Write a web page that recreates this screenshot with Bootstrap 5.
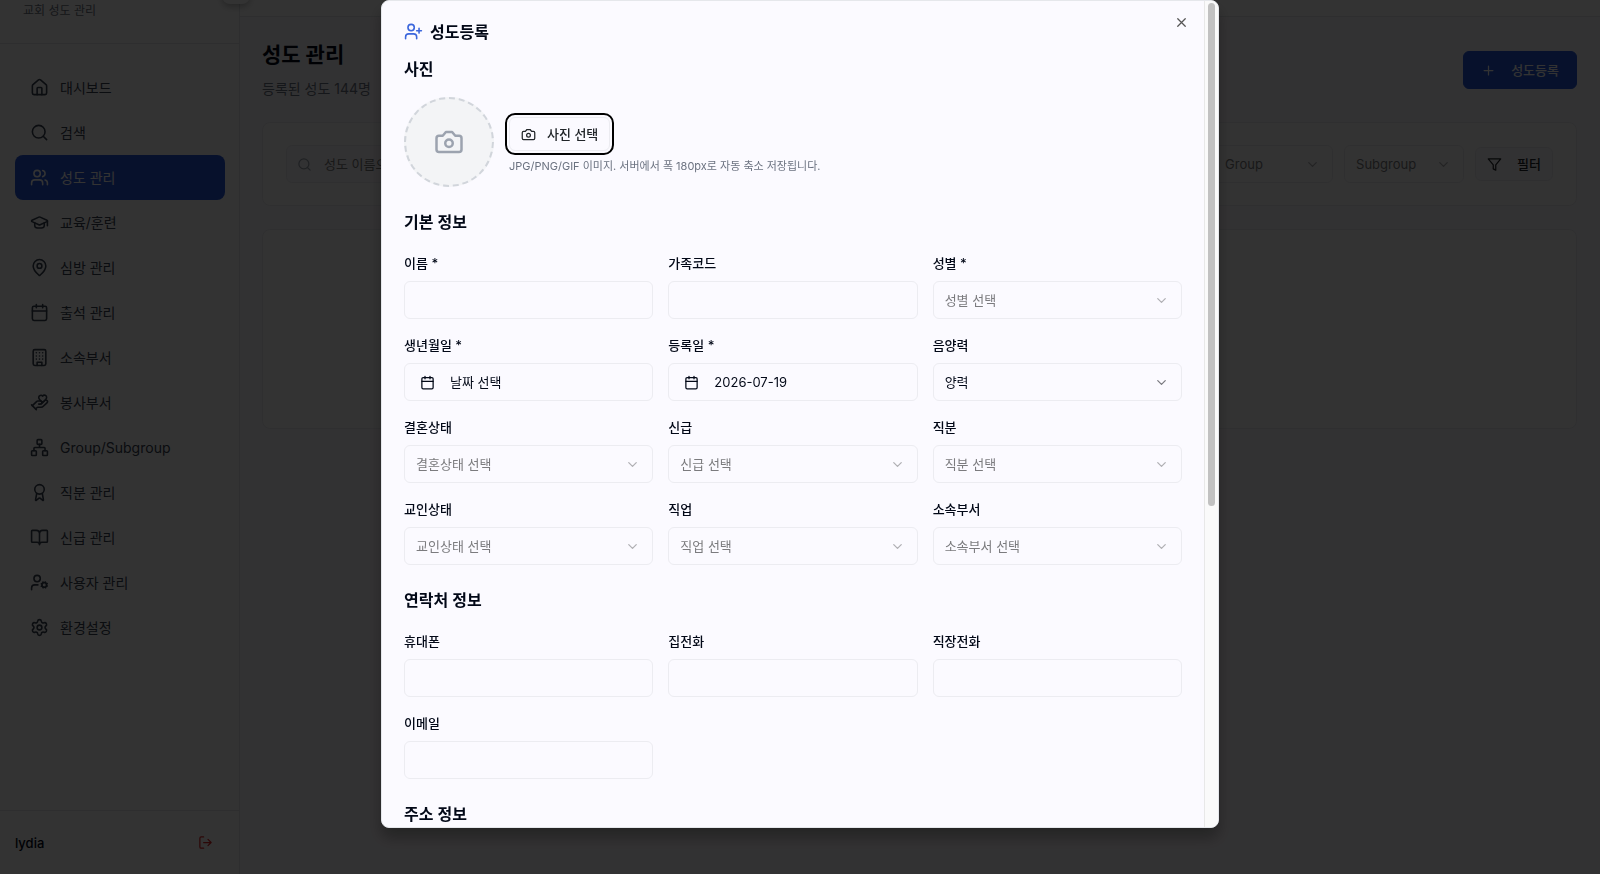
<!DOCTYPE html>
<html lang="ko">
<head>
<meta charset="utf-8">
<meta name="viewport" content="width=device-width, initial-scale=1">
<title>성도 관리</title>
<link href="https://cdn.jsdelivr.net/npm/bootstrap@5.3.0/dist/css/bootstrap.min.css" rel="stylesheet">
<script src="https://cdn.jsdelivr.net/npm/bootstrap@5.3.0/dist/js/bootstrap.bundle.min.js" defer></script>
<style>
  :root {
    --ink: #020817;
    --slate: #374151;
    --muted: #6b7280;
    --line: #ececf1;
    --canvas: #fbfaff;
    --primary: #2456db;
  }
  body {
    font-family: Inter, "Noto Sans CJK KR", sans-serif;
    font-size: 13px;
    line-height: 22px;
    color: var(--ink);
    background: var(--canvas);
    overflow: hidden;
  }
  .ico {
    width: 15px; height: 15px; flex: none;
    fill: none; stroke: currentColor; stroke-width: 2;
    stroke-linecap: round; stroke-linejoin: round;
  }
  .ico-md { width: 19px; height: 19px; }
  .ico-lg { width: 30px; height: 30px; }
  .btn, .form-control, .form-select { font-size: 13px; line-height: 20px; border-radius: 6px; }
  .btn { --bs-btn-padding-x: 15px; --bs-btn-padding-y: 0; font-weight: 500; }

  .side { width: 240px; background: #fff; border-right: 1px solid #e5e7eb; }
  .side-head { height: 44px; padding-left: 23px; border-bottom: 1px solid #e5e7eb; color: var(--muted); font-size: 12px; }
  .side-nav { padding: 21px 14px 21px 15px; }
  .side-nav .nav-link {
    display: flex; align-items: center; gap: 11px;
    height: 45px; padding: 0 15px; border-radius: 8px;
    color: var(--slate); font-size: 14px;
  }
  .side-nav .nav-link.active { background: var(--primary); color: #fff; }
  .side-foot { height: 64px; padding: 0 26px 0 15px; border-top: 1px solid #e5e7eb; }
  .side-foot .btn { color: #dc2626; }
  .side-toggle { top: -24px; left: 222px; width: 28px; height: 28px; background: #fff; border-radius: 8px; box-shadow: 0 3px 6px rgba(0,0,0,.25); }

  .topbar { height: 17px; background: #fff; border-bottom: 1px solid #e5e7eb; }
  .page { padding: 23px 23px 0 22px; }
  .page h1 { font-size: 21px; line-height: 30px; }
  .page-sub { font-size: 14px; color: var(--muted); }
  .btn-main { --bs-btn-color: #fff; --bs-btn-bg: var(--primary); --bs-btn-border-color: var(--primary); height: 38px; padding: 0 17px; gap: 15px; }
  .panel { background: #fff; border: 1px solid var(--line); border-radius: 8px; }
  .tools { padding: 23px; height: 84px; margin-top: 22px; gap: 11px; }
  .results { height: 200px; margin-top: 23px; }
  .search-box { height: 38px; border: 1px solid var(--line); border-radius: 6px; background: var(--canvas); padding: 0 10px; gap: 10px; color: #9ca3af; }
  .search-box input { border: 0; outline: 0; background: none; min-width: 0; flex: 1; }
  .search-box input::placeholder { color: #777; }
  .short-select { width: 120px; }
  .btn-quiet { --bs-btn-bg: var(--canvas); --bs-btn-border-color: var(--line); height: 34px; padding: 0 11px; gap: 15px; }

  .dim { background: rgba(0,0,0,.8); }
  .sheet { width: 838px; max-width: 100%; height: calc(100vh - 46px); }
  .sheet-box {
    background: var(--canvas); border: 1px solid #e5e7eb; border-radius: 8px;
    height: 100%; overflow: hidden; box-shadow: 0 10px 15px rgba(0,0,0,.3);
  }
  .sheet-scroll { padding: 21px 22px; overflow: hidden; min-width: 0; }
  .rail { width: 14px; padding: 2px 3px 0; background: #fafafa; border-left: 1px solid #e8e8e8; }
  .rail-thumb { height: 61%; background: #c1c1c1; border-radius: 4px; }
  .sheet h2, .sheet h3 { font-size: 16px; font-weight: 600; line-height: 26px; margin: 0; }
  .sheet h2 { line-height: 18px; }
  .sheet-title { color: #3b66dc; gap: 7px; margin-bottom: 15px; }
  .sheet-title h2 { color: var(--ink); }
  .sheet-close { top: 14px; right: 28px; width: 16px; height: 16px; color: #555; line-height: 1; }
  .photo-row { margin: 15px 0 22px; gap: 15px; }
  .photo { width: 90px; height: 90px; background: #f3f4f6; border: 2px dashed #d1d5db; color: #9ca3af; }
  .photo-side { padding-top: 7px; }
  .pick { --bs-btn-border-color: var(--line); height: 34px; outline: 2px solid #000; outline-offset: 2px; padding: 0 11px; gap: 11px; }
  .hint { font-size: 11px; line-height: 15px; color: var(--muted); margin-top: 8px; }
  .fields { display: grid; grid-template-columns: repeat(3, minmax(0, 1fr)); gap: 15px; margin: 17px 0 22px; }
  .fields label { display: block; font-weight: 500; margin-bottom: 7px; line-height: 22px; }
  .form-control, .form-select, .date-btn { height: 38px; border: 1px solid var(--line); background-color: transparent; color: var(--ink); padding: 0 11px; }
  .form-select {
    --bs-form-select-bg-img: url("data:image/svg+xml,%3csvg xmlns='http://www.w3.org/2000/svg' viewBox='0 0 24 24' fill='none' stroke='%237a7a80' stroke-width='2' stroke-linecap='round' stroke-linejoin='round'%3e%3cpath d='m6 9 6 6 6-6'/%3e%3c/svg%3e");
    background-position: right 12px center; background-size: 15px;
  }
  .form-select.unset {
    --bs-form-select-bg-img: url("data:image/svg+xml,%3csvg xmlns='http://www.w3.org/2000/svg' viewBox='0 0 24 24' fill='none' stroke='%23b0b0b4' stroke-width='2' stroke-linecap='round' stroke-linejoin='round'%3e%3cpath d='m6 9 6 6 6-6'/%3e%3c/svg%3e");
    color: #7b7b7e;
  }
  .date-btn { font-weight: 400; gap: 15px; padding: 0 15px; }
</style>
</head>
<body>
<div class="d-flex vh-100 position-relative">
  <aside class="side d-flex flex-column flex-shrink-0">
    <div class="side-head flex-shrink-0">교회 성도 관리</div>
    <nav class="side-nav nav flex-column flex-grow-1 flex-nowrap">
      <a class="nav-link" href="#"><svg class="ico ico-md" viewBox="0 0 24 24"><path d="M15 21v-8a1 1 0 0 0-1-1h-4a1 1 0 0 0-1 1v8"/><path d="M3 10a2 2 0 0 1 .709-1.528l7-5.999a2 2 0 0 1 2.582 0l7 5.999A2 2 0 0 1 21 10v9a2 2 0 0 1-2 2H5a2 2 0 0 1-2-2z"/></svg>대시보드</a>
      <a class="nav-link" href="#"><svg class="ico ico-md" viewBox="0 0 24 24"><circle cx="11" cy="11" r="8"/><path d="m21 21-4.3-4.3"/></svg>검색</a>
      <a class="nav-link active" href="#"><svg class="ico ico-md" viewBox="0 0 24 24"><path d="M16 21v-2a4 4 0 0 0-4-4H6a4 4 0 0 0-4 4v2"/><circle cx="9" cy="7" r="4"/><path d="M22 21v-2a4 4 0 0 0-3-3.87M16 3.13a4 4 0 0 1 0 7.75"/></svg>성도 관리</a>
      <a class="nav-link" href="#"><svg class="ico ico-md" viewBox="0 0 24 24"><path d="M21.42 10.922a1 1 0 0 0-.019-1.838L12.83 5.18a2 2 0 0 0-1.66 0L2.6 9.08a1 1 0 0 0 0 1.832l8.57 3.908a2 2 0 0 0 1.66 0z"/><path d="M22 10v6M6 12.5V16a6 3 0 0 0 12 0v-3.5"/></svg>교육/훈련</a>
      <a class="nav-link" href="#"><svg class="ico ico-md" viewBox="0 0 24 24"><path d="M20 10c0 4.993-5.539 10.193-7.399 11.799a1 1 0 0 1-1.202 0C9.539 20.193 4 14.993 4 10a8 8 0 0 1 16 0"/><circle cx="12" cy="10" r="3"/></svg>심방 관리</a>
      <a class="nav-link" href="#"><svg class="ico ico-md" viewBox="0 0 24 24"><path d="M8 2v4M16 2v4M3 10h18"/><rect width="18" height="18" x="3" y="4" rx="2"/></svg>출석 관리</a>
      <a class="nav-link" href="#"><svg class="ico ico-md" viewBox="0 0 24 24"><rect width="16" height="20" x="4" y="2" rx="2"/><path d="M9 22v-4h6v4M8 6h.01M16 6h.01M12 6h.01M12 10h.01M12 14h.01M16 10h.01M16 14h.01M8 10h.01M8 14h.01"/></svg>소속부서</a>
      <a class="nav-link" href="#"><svg class="ico ico-md" viewBox="0 0 24 24"><path d="M11 14h2a2 2 0 1 0 0-4h-3c-.6 0-1.1.2-1.4.6L3 16"/><path d="m7 20 1.6-1.4c.3-.4.8-.6 1.4-.6h4c1.1 0 2.1-.4 2.8-1.2l4.6-4.4a2 2 0 0 0-2.75-2.91l-4.2 3.9"/><path d="m2 15 6 6M19.5 8.5c.7-.7 1.5-1.6 1.5-2.7A2.73 2.73 0 0 0 16 4a2.78 2.78 0 0 0-5 1.8c0 1.2.8 2 1.5 2.8L16 12Z"/></svg>봉사부서</a>
      <a class="nav-link" href="#"><svg class="ico ico-md" viewBox="0 0 24 24"><rect x="16" y="16" width="6" height="6" rx="1"/><rect x="2" y="16" width="6" height="6" rx="1"/><rect x="9" y="2" width="6" height="6" rx="1"/><path d="M5 16v-3a1 1 0 0 1 1-1h12a1 1 0 0 1 1 1v3M12 12V8"/></svg>Group/Subgroup</a>
      <a class="nav-link" href="#"><svg class="ico ico-md" viewBox="0 0 24 24"><path d="m15.477 12.89 1.515 8.526a.5.5 0 0 1-.81.47l-3.58-2.687a1 1 0 0 0-1.197 0l-3.586 2.686a.5.5 0 0 1-.81-.469l1.514-8.526"/><circle cx="12" cy="8" r="6"/></svg>직분 관리</a>
      <a class="nav-link" href="#"><svg class="ico ico-md" viewBox="0 0 24 24"><path d="M12 7v14M3 18a1 1 0 0 1-1-1V4a1 1 0 0 1 1-1h5a4 4 0 0 1 4 4 4 4 0 0 1 4-4h5a1 1 0 0 1 1 1v13a1 1 0 0 1-1 1h-6a3 3 0 0 0-3 3 3 3 0 0 0-3-3z"/></svg>신급 관리</a>
      <a class="nav-link" href="#"><svg class="ico ico-md" viewBox="0 0 24 24"><circle cx="18" cy="15" r="3"/><circle cx="9" cy="7" r="4"/><path d="M10 15H6a4 4 0 0 0-4 4v2M21.7 16.4l-.9-.3M15.2 13.9l-.9-.3M16.6 18.7l.3-.9M19.1 12.2l.3-.9M19.6 18.7l-.4-1M16.8 12.3l-.4-1M14.3 16.6l1-.4M20.7 13.8l1-.4"/></svg>사용자 관리</a>
      <a class="nav-link" href="#"><svg class="ico ico-md" viewBox="0 0 24 24"><path d="M9.671 4.136a2.34 2.34 0 0 1 4.659 0 2.34 2.34 0 0 0 3.319 1.915 2.34 2.34 0 0 1 2.33 4.033 2.34 2.34 0 0 0 0 3.831 2.34 2.34 0 0 1-2.33 4.033 2.34 2.34 0 0 0-3.319 1.915 2.34 2.34 0 0 1-4.659 0 2.34 2.34 0 0 0-3.32-1.915 2.34 2.34 0 0 1-2.33-4.033 2.34 2.34 0 0 0 0-3.831A2.34 2.34 0 0 1 6.35 6.051a2.34 2.34 0 0 0 3.319-1.915"/><circle cx="12" cy="12" r="3"/></svg>환경설정</a>
    </nav>
    <div class="side-foot d-flex align-items-center justify-content-between flex-shrink-0">
      <span class="fw-medium">lydia</span>
      <button type="button" class="btn p-0 border-0 d-flex" aria-label="로그아웃"><svg class="ico" viewBox="0 0 24 24"><path d="M9 21H5a2 2 0 0 1-2-2V5a2 2 0 0 1 2-2h4M16 17l5-5-5-5M21 12H9"/></svg></button>
    </div>
  </aside>
  <div class="side-toggle position-absolute"></div>

  <div class="flex-grow-1">
    <div class="topbar"></div>
    <main class="page">
      <div class="d-flex align-items-center justify-content-between">
        <div>
          <h1 class="fw-bold mb-2">성도 관리</h1>
          <div class="page-sub">등록된 성도 144명</div>
        </div>
        <button type="button" class="btn btn-main d-flex align-items-center"><svg class="ico" viewBox="0 0 24 24"><path d="M5 12h14M12 5v14"/></svg>성도등록</button>
      </div>
      <div class="panel tools d-flex align-items-center">
        <div class="search-box d-flex align-items-center flex-grow-1">
          <svg class="ico" viewBox="0 0 24 24"><circle cx="11" cy="11" r="8"/><path d="m21 21-4.3-4.3"/></svg>
          <input type="search" placeholder="성도 이름으로 검색" aria-label="성도 검색">
        </div>
        <select class="form-select short-select unset" aria-label="Group"><option>Group</option></select>
        <select class="form-select short-select unset" aria-label="Subgroup"><option>Subgroup</option></select>
        <button type="button" class="btn btn-quiet d-flex align-items-center"><svg class="ico" viewBox="0 0 24 24"><path d="M22 3H2l8 9.46V19l4 2v-8.54z"/></svg>필터</button>
      </div>
      <div class="panel results"></div>
    </main>
  </div>
</div>

<div class="modal dim show d-block overflow-hidden" role="dialog" aria-modal="true" aria-labelledby="sheetTitle">
  <div class="sheet mx-auto">
    <div class="sheet-box d-flex position-relative">
      <form class="sheet-scroll flex-grow-1">
        <div class="sheet-title d-flex align-items-center">
          <svg class="ico ico-md" viewBox="0 0 24 24"><path d="M16 21v-2a4 4 0 0 0-4-4H6a4 4 0 0 0-4 4v2"/><circle cx="9" cy="7" r="4"/><path d="M19 8v6M22 11h-6"/></svg>
          <h2 id="sheetTitle">성도등록</h2>
        </div>
        <h3>사진</h3>
        <div class="photo-row d-flex align-items-center">
          <div class="photo rounded-circle d-flex align-items-center justify-content-center flex-shrink-0"><svg class="ico ico-lg" viewBox="0 0 24 24"><path d="M14.5 4h-5L7 7H4a2 2 0 0 0-2 2v9a2 2 0 0 0 2 2h16a2 2 0 0 0 2-2V9a2 2 0 0 0-2-2h-3z"/><circle cx="12" cy="13" r="3"/></svg></div>
          <div class="photo-side">
            <button type="button" class="btn pick d-flex align-items-center"><svg class="ico" viewBox="0 0 24 24"><path d="M14.5 4h-5L7 7H4a2 2 0 0 0-2 2v9a2 2 0 0 0 2 2h16a2 2 0 0 0 2-2V9a2 2 0 0 0-2-2h-3z"/><circle cx="12" cy="13" r="3"/></svg>사진 선택</button>
            <p class="hint mb-0">JPG/PNG/GIF 이미지. 서버에서 폭 180px로 자동 축소 저장됩니다.</p>
          </div>
        </div>

        <h3>기본 정보</h3>
        <div class="fields">
          <div><label for="fName">이름 *</label><input id="fName" type="text" class="form-control"></div>
          <div><label for="fFamily">가족코드</label><input id="fFamily" type="text" class="form-control"></div>
          <div><label for="fSex">성별 *</label><select id="fSex" class="form-select unset"><option>성별 선택</option></select></div>
          <div><label for="fBirth">생년월일 *</label><button id="fBirth" type="button" class="btn date-btn w-100 d-flex align-items-center"><svg class="ico" viewBox="0 0 24 24"><path d="M8 2v4M16 2v4M3 10h18"/><rect width="18" height="18" x="3" y="4" rx="2"/></svg>날짜 선택</button></div>
          <div><label for="fJoined">등록일 *</label><button id="fJoined" type="button" class="btn date-btn w-100 d-flex align-items-center"><svg class="ico" viewBox="0 0 24 24"><path d="M8 2v4M16 2v4M3 10h18"/><rect width="18" height="18" x="3" y="4" rx="2"/></svg>2026-07-19</button></div>
          <div><label for="fCal">음양력</label><select id="fCal" class="form-select"><option>양력</option></select></div>
          <div><label for="fMarital">결혼상태</label><select id="fMarital" class="form-select unset"><option>결혼상태 선택</option></select></div>
          <div><label for="fFaith">신급</label><select id="fFaith" class="form-select unset"><option>신급 선택</option></select></div>
          <div><label for="fRole">직분</label><select id="fRole" class="form-select unset"><option>직분 선택</option></select></div>
          <div><label for="fStatus">교인상태</label><select id="fStatus" class="form-select unset"><option>교인상태 선택</option></select></div>
          <div><label for="fJob">직업</label><select id="fJob" class="form-select unset"><option>직업 선택</option></select></div>
          <div><label for="fDept">소속부서</label><select id="fDept" class="form-select unset"><option>소속부서 선택</option></select></div>
        </div>

        <h3>연락처 정보</h3>
        <div class="fields">
          <div><label for="fMobile">휴대폰</label><input id="fMobile" type="tel" class="form-control"></div>
          <div><label for="fHome">집전화</label><input id="fHome" type="tel" class="form-control"></div>
          <div><label for="fWork">직장전화</label><input id="fWork" type="tel" class="form-control"></div>
          <div><label for="fMail">이메일</label><input id="fMail" type="email" class="form-control"></div>
        </div>

        <h3>주소 정보</h3>
      </form>
      <div class="rail flex-shrink-0"><div class="rail-thumb"></div></div>
      <button type="button" class="btn sheet-close position-absolute p-0 border-0 d-flex" aria-label="닫기"><svg class="ico" viewBox="0 0 24 24"><path d="M18 6 6 18M6 6l12 12"/></svg></button>
    </div>
  </div>
</div>
</body>
</html>
